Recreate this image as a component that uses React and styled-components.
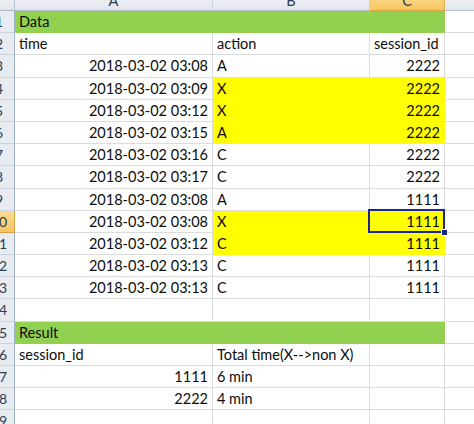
import React from 'react';
import styled, { createGlobalStyle, css } from 'styled-components';

const GlobalStyle = createGlobalStyle`
  html, body { margin: 0; padding: 0; background: #fff; overflow: hidden; }
  body { font-family: Lato, "Open Sans", sans-serif; }
`;

const Viewport = styled.div`
  width: 474px;
  height: 424px;
  overflow: hidden;
  background: #fff;
`;

const Sheet = styled.div`
  display: grid;
  grid-template-columns: 31px 198px 157px 75px 80px;
  grid-template-rows: 22px repeat(19, 22.2px);
  margin: -11px 0 0 -16px;
  font-family: Lato, "Open Sans", sans-serif;
  font-size: 14.5px;
  color: #0c0c0c;
`;

const Corner = styled.div`
  box-sizing: border-box;
  background: linear-gradient(#f7f8fa, #e2e6ec);
  border-right: 1px solid #b9c3d0;
  border-bottom: 1px solid #a9b6c6;
`;

const ColHeader = styled.div`
  box-sizing: border-box;
  text-align: center;
  padding-top: 2px;
  line-height: 20px;
  color: #2e3c55;
  background: ${p => (p.$active ? 'linear-gradient(#fbe4a6, #f5c65e)' : 'linear-gradient(#f7f8fa, #e2e6ec)')};
  border-right: 1px solid ${p => (p.$active ? '#e0b050' : '#c9d0da')};
  border-bottom: 1px solid ${p => (p.$active ? '#d9a441' : '#b3bfcd')};
`;

const RowHeader = styled.div`
  box-sizing: border-box;
  text-align: center;
  line-height: 22px;
  font-size: 14px;
  color: #2e3c55;
  background: ${p => (p.$active ? 'linear-gradient(#fbdc95, #f5c465)' : '#e8ecf1')};
  border-right: 1px solid ${p => (p.$active ? '#d9a441' : '#9eb3c9')};
  border-bottom: 1px solid ${p => (p.$active ? '#d9a441' : '#c9d2de')};
  overflow: hidden;
`;

const fills = { green: '#92d050', yellow: '#ffff00' };

const Cell = styled.div`
  box-sizing: border-box;
  position: relative;
  padding: 0 4px;
  line-height: 22px;
  white-space: nowrap;
  text-align: ${p => p.$align || 'left'};
  background: ${p => (p.$fill ? fills[p.$fill] : '#fff')};
  border-right: 1px solid ${p => (p.$fill ? fills[p.$fill] : '#dadcdd')};
  border-bottom: 1px solid ${p => (p.$fill ? fills[p.$fill] : '#dadcdd')};
  ${p =>
    p.$selected &&
    css`
      z-index: 2;
      &::after {
        content: '';
        position: absolute;
        left: -2px;
        top: -2px;
        right: -1px;
        bottom: -1px;
        border: 2px solid #1c2593;
      }
    `}
`;

const FillHandle = styled.span`
  position: absolute;
  right: -4px;
  bottom: -4px;
  width: 5px;
  height: 5px;
  background: #1c2593;
  border: 1px solid #fff;
  z-index: 3;
`;

const rows = [
  { a: 'Data', fill: 'green' },
  { a: 'time', b: 'action', c: 'session_id' },
  { a: '2018-03-02 03:08', b: 'A', c: '2222', ar: true },
  { a: '2018-03-02 03:09', b: 'X', c: '2222', ar: true, fill: 'yellow' },
  { a: '2018-03-02 03:12', b: 'X', c: '2222', ar: true, fill: 'yellow' },
  { a: '2018-03-02 03:15', b: 'A', c: '2222', ar: true, fill: 'yellow' },
  { a: '2018-03-02 03:16', b: 'C', c: '2222', ar: true },
  { a: '2018-03-02 03:17', b: 'C', c: '2222', ar: true },
  { a: '2018-03-02 03:08', b: 'A', c: '1111', ar: true },
  { a: '2018-03-02 03:08', b: 'X', c: '1111', ar: true, fill: 'yellow', sel: true },
  { a: '2018-03-02 03:12', b: 'C', c: '1111', ar: true, fill: 'yellow' },
  { a: '2018-03-02 03:13', b: 'C', c: '1111', ar: true },
  { a: '2018-03-02 03:13', b: 'C', c: '1111', ar: true },
  {},
  { a: 'Result', fill: 'green' },
  { a: 'session_id', b: 'Total time(X-->non X)' },
  { a: '1111', b: '6 min', ar: true },
  { a: '2222', b: '4 min', ar: true },
  {},
];

export default function App() {
  return (
    <Viewport>
      <GlobalStyle />
      <Sheet>
        <Corner />
        <ColHeader>A</ColHeader>
        <ColHeader>B</ColHeader>
        <ColHeader $active>C</ColHeader>
        <ColHeader>D</ColHeader>
        {rows.map((r, i) => {
          const aFill = r.fill === 'green' ? 'green' : undefined;
          const bcFill = r.fill;
          return (
            <React.Fragment key={i}>
              <RowHeader $active={r.sel}>{i + 1}</RowHeader>
              <Cell $fill={aFill} $align={r.ar ? 'right' : 'left'}>{r.a}</Cell>
              <Cell $fill={bcFill}>{r.b}</Cell>
              <Cell $fill={bcFill} $align={r.c === 'session_id' ? 'left' : 'right'} $selected={r.sel}>
                {r.c}
                {r.sel && <FillHandle />}
              </Cell>
              <Cell />
            </React.Fragment>
          );
        })}
      </Sheet>
    </Viewport>
  );
}
